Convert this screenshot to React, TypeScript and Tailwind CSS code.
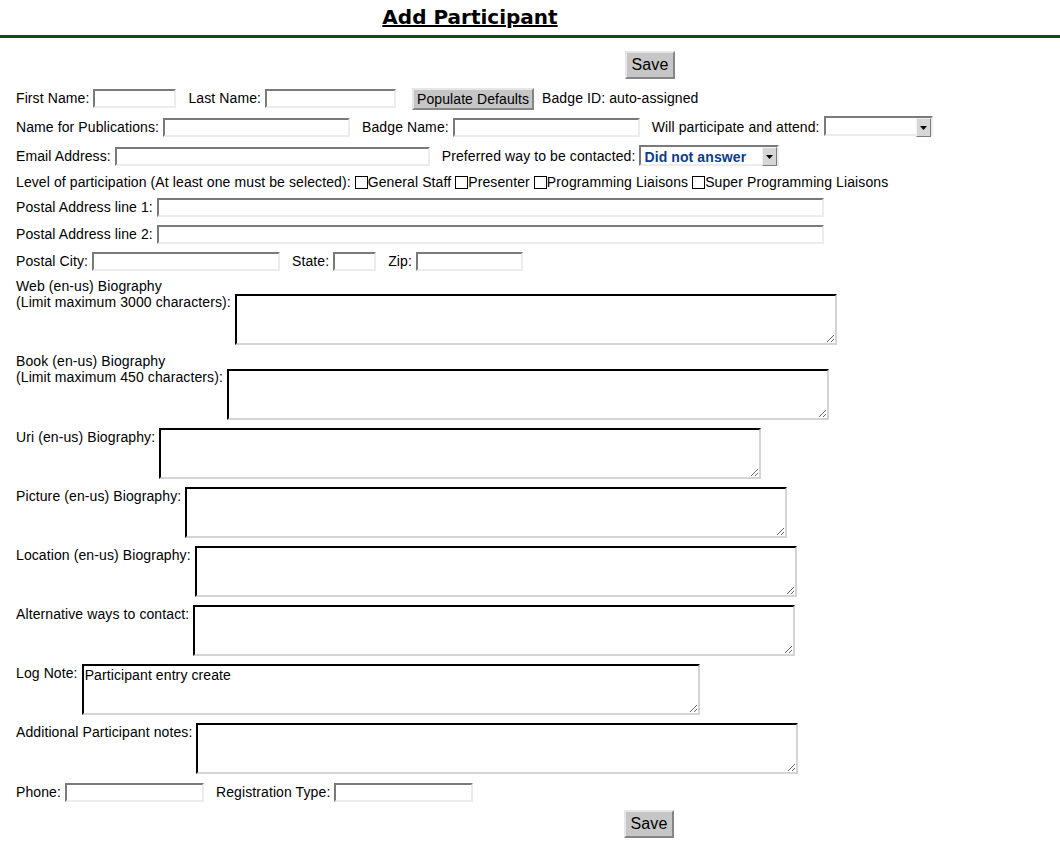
const field =
  "h-[19px] border-2 border-t-[#7a7a7a] border-l-[#7a7a7a] border-r-[#ececec] border-b-[#ececec] bg-white px-[2px] text-[14px] outline-none";
const area =
  "ml-1 h-[51px] border-2 border-t-black border-l-black border-r-[#d4d4d4] border-b-[#d4d4d4] bg-white p-[1px] text-[14px] leading-[16px] outline-none";
const btn =
  "border-2 border-t-[#e6e6e6] border-l-[#e6e6e6] border-r-[#858585] border-b-[#858585] bg-[#c6c6c6] leading-[16px] text-black";

function Arrow() {
  return (
    <span className="pointer-events-none absolute top-[2px] right-[2px] bottom-[2px] flex w-[15px] items-center justify-center border border-t-[#f4f4f4] border-l-[#f4f4f4] border-r-[#7c7c7c] border-b-[#7c7c7c] bg-[#d6d6d6]">
      <svg width="7" height="4" viewBox="0 0 7 4">
        <path d="M0 0h7L3.5 4z" fill="#000" />
      </svg>
    </span>
  );
}

function Check({ label }: { label: string }) {
  return (
    <>
      <input
        type="checkbox"
        className="h-[13px] w-[13px] appearance-none border border-black bg-white align-[-2px]"
      />
      {label}
    </>
  );
}

function AreaRow({
  label,
  second,
  value,
  wide,
}: {
  label: string;
  second?: string;
  value?: string;
  wide?: boolean;
}) {
  const w = wide ? " w-[618px]" : " w-[602px]";
  if (second) {
    return (
      <div className="mt-[8px] flex items-start">
        <label className="leading-[16px]">
          {label}
          <br />
          {second}
        </label>
        <textarea className={area + w + " mt-[16px]"} defaultValue={value} />
      </div>
    );
  }
  return (
    <div className="mt-[8px] flex items-start">
      <label className="pt-[1px] leading-[16px]">{label}</label>
      <textarea className={area + w} defaultValue={value} />
    </div>
  );
}

export default function App() {
  return (
    <div className="min-h-screen bg-white font-['Liberation_Sans',Arial,sans-serif] text-[14px] tracking-[0.1px] text-black">
      <div className="h-[38px] border-b-[3px] border-[#0e4f0e]">
        <h1 className="w-[940px] pt-[2px] text-center font-['DejaVu_Sans',sans-serif] text-[20px] font-bold tracking-normal underline">
          Add Participant
        </h1>
      </div>

      <form className="px-4">
        <div className="pt-[13px] pl-[609px]">
          <button type="button" className={btn + " h-[28px] w-[50px] text-[16px]"}>
            Save
          </button>
        </div>

        <div className="mt-[5px] flex h-[29px] items-center">
          <label className="mr-1">First Name:</label>
          <input className={field + " w-[83px]"} />
          <label className="mr-1 ml-3">Last Name:</label>
          <input className={field + " w-[131px]"} />
          <button type="button" className={btn + " ml-4 h-[22px] w-[122px] text-[14px]"}>
            Populate Defaults
          </button>
          <span className="ml-2">Badge ID: auto-assigned</span>
        </div>

        <div className="flex h-[29px] items-center">
          <label className="mr-1">Name for Publications:</label>
          <input className={field + " w-[187px]"} />
          <label className="mr-1 ml-3">Badge Name:</label>
          <input className={field + " w-[187px]"} />
          <label className="mr-1 ml-3">Will participate and attend:</label>
          <div className="relative">
            <select className={field + " h-[20px] w-[109px] appearance-none"}>
              <option></option>
            </select>
            <Arrow />
          </div>
        </div>

        <div className="flex h-[29px] items-center">
          <label className="mr-1">Email Address:</label>
          <input className={field + " w-[315px]"} />
          <label className="mr-1 ml-3">Preferred way to be contacted:</label>
          <div className="relative">
            <select
              className={field + " h-[21px] w-[140px] appearance-none pl-[3px] font-bold text-[#0a3c8c]"}
            >
              <option>Did not answer</option>
            </select>
            <Arrow />
          </div>
        </div>

        <div className="flex h-[23px] items-center">
          <span>
            Level of participation (At least one must be selected):{" "}
            <Check label="General Staff" /> <Check label="Presenter" />{" "}
            <Check label="Programming Liaisons" /> <Check label="Super Programming Liaisons" />
          </span>
        </div>

        <div className="flex h-[27px] items-center">
          <label className="mr-1">Postal Address line 1:</label>
          <input className={field + " w-[667px]"} />
        </div>
        <div className="flex h-[27px] items-center">
          <label className="mr-1">Postal Address line 2:</label>
          <input className={field + " w-[667px]"} />
        </div>
        <div className="flex h-[27px] items-center">
          <label className="mr-1">Postal City:</label>
          <input className={field + " w-[188px]"} />
          <label className="mr-1 ml-3">State:</label>
          <input className={field + " w-[43px]"} />
          <label className="mr-1 ml-3">Zip:</label>
          <input className={field + " w-[107px]"} />
        </div>

        <div className="-mt-[5px]">
          <AreaRow label="Web (en-us) Biography" second="(Limit maximum 3000 characters):" />
        </div>
        <AreaRow label="Book (en-us) Biography" second="(Limit maximum 450 characters):" />
        <AreaRow label="Uri (en-us) Biography:" />
        <AreaRow label="Picture (en-us) Biography:" />
        <AreaRow label="Location (en-us) Biography:" />
        <AreaRow label="Alternative ways to contact:" />
        <AreaRow label="Log Note:" value="Participant entry create" wide />
        <AreaRow label="Additional Participant notes:" />

        <div className="mt-[3px] flex h-[30px] items-center">
          <label className="mr-1">Phone:</label>
          <input className={field + " w-[139px]"} />
          <label className="mr-1 ml-3">Registration Type:</label>
          <input className={field + " w-[139px]"} />
        </div>

        <div className="mt-[3px] pl-[608px]">
          <button type="button" className={btn + " h-[28px] w-[50px] text-[16px]"}>
            Save
          </button>
        </div>
      </form>
    </div>
  );
}
